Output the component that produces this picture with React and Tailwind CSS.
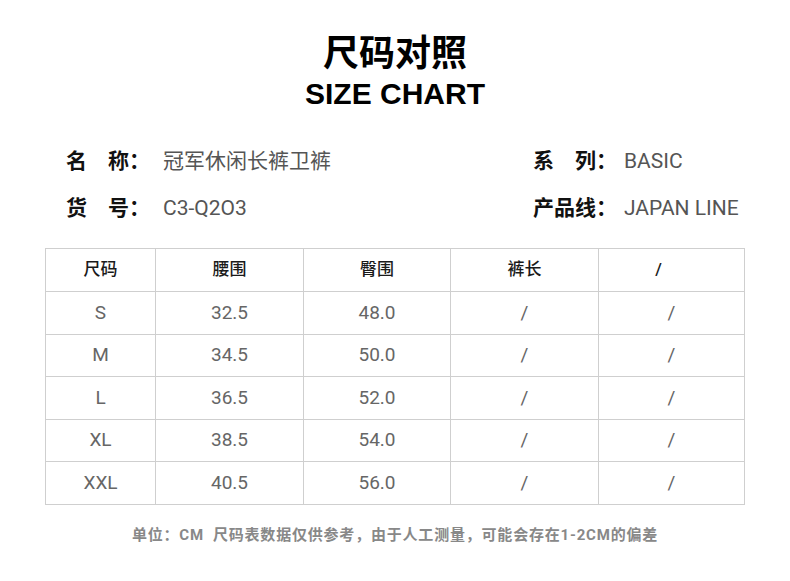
import React from 'react';

const rows = [
  ['S', '32.5', '48.0', '/', '/'],
  ['M', '34.5', '50.0', '/', '/'],
  ['L', '36.5', '52.0', '/', '/'],
  ['XL', '38.5', '54.0', '/', '/'],
  ['XXL', '40.5', '56.0', '/', '/'],
];

const cols = ['w-[109px]', 'w-[148px]', 'w-[147px]', 'w-[148px]', 'flex-1'];

const InfoItem = ({ label, value, labelWidth }) => (
  <div className="flex items-center h-[28px]">
    <span className={`${labelWidth} text-[21px] font-bold text-[#111] whitespace-nowrap`}>{label}</span>
    <span className="text-[21px] text-[#555] whitespace-nowrap">{value}</span>
  </div>
);

export default function App() {
  return (
    <div
      className="w-[790px] h-[581px] bg-white flex flex-col items-center"
      style={{ fontFamily: 'Roboto, "Noto Sans CJK SC", sans-serif' }}
    >
      <h1 className="mt-[32px] text-[36px] leading-[44px] font-bold text-black">尺码对照</h1>
      <h2
        className="text-[30px] leading-[36px] font-black text-black"
        style={{ fontFamily: '"Liberation Sans", Arial, sans-serif' }}
      >
        SIZE CHART
      </h2>

      <div className="w-full mt-[36px] pl-[66px] grid grid-cols-[467px_auto] gap-y-[19px]">
        <InfoItem label="名　称：" value="冠军休闲长裤卫裤" labelWidth="w-[97px]" />
        <InfoItem label="系　列：" value="BASIC" labelWidth="w-[91px]" />
        <InfoItem label="货　号：" value="C3-Q2O3" labelWidth="w-[97px]" />
        <InfoItem label="产品线：" value="JAPAN LINE" labelWidth="w-[91px]" />
      </div>

      <div className="mt-[25px] w-[700px] border border-[#cfcfcf]">
        <div className="flex h-[42px] items-center">
          {['尺码', '腰围', '臀围', '裤长', '/'].map((h, i) => (
            <div
              key={i}
              className={`${cols[i]} h-full flex items-center justify-center text-[17px] text-[#1a1a1a] font-medium ${i > 0 ? 'border-l border-[#cfcfcf]' : ''}`}
            >
              <span className={i === 4 ? 'mr-[26px]' : ''}>{h}</span>
            </div>
          ))}
        </div>
        {rows.map((r) => (
          <div key={r[0]} className="flex h-[42.5px] items-center border-t border-[#cfcfcf]">
            {r.map((c, i) => (
              <div
                key={i}
                className={`${cols[i]} h-full flex items-center justify-center text-[19px] text-[#666] ${i > 0 ? 'border-l border-[#cfcfcf]' : ''}`}
              >
                {c}
              </div>
            ))}
          </div>
        ))}
      </div>

      <p className="mt-[20px] text-[15px] leading-[20px] font-bold text-[#888] tracking-[0.8px]">
        单位：CM&nbsp;&nbsp;尺码表数据仅供参考，由于人工测量，可能会存在1-2CM的偏差
      </p>
    </div>
  );
}
